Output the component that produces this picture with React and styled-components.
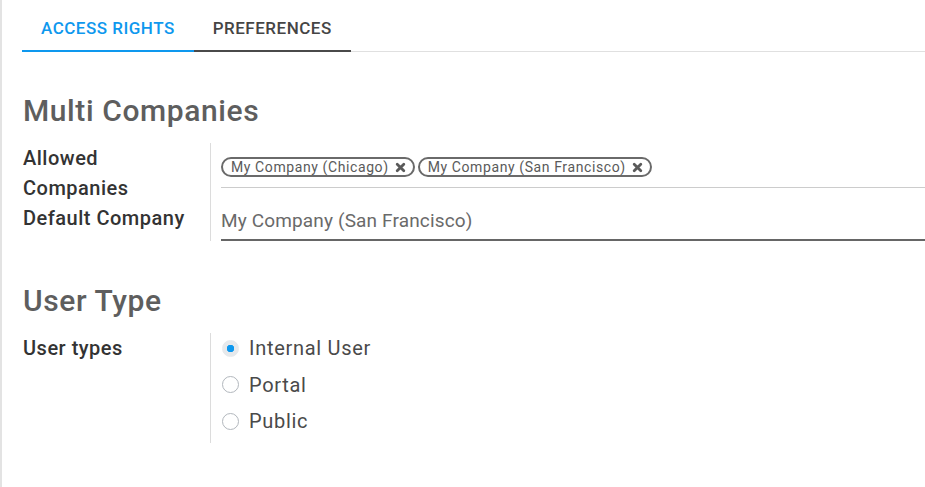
import styled, { createGlobalStyle } from "styled-components"

const GlobalStyle = createGlobalStyle`
  body {
    margin: 0;
    background: #FFFFFF;
    font-family: 'Roboto', 'Liberation Sans', sans-serif;
  }
`

function RemoveIcon () {
  return (
    <svg width="11" height="11" viewBox="0 0 11 11">
      <path d="M2.2 2.2 L8.8 8.8 M8.8 2.2 L2.2 8.8" stroke="#5a5a5a" strokeWidth="2.8" strokeLinecap="round" />
    </svg>
  )
}

function Tag ({label}) {
  return (
    <StyledTag>
      <span>{label}</span>
      <RemoveIcon />
    </StyledTag>
  )
}

function Radio ({label, checked}) {
  return (
    <Option>
      <Circle $checked={checked} />
      <OptionLabel>{label}</OptionLabel>
    </Option>
  )
}

export default function App () {
  return (
    <>
      <GlobalStyle />
      <Sheet>
        <Tabs>
          <Tab $active>Access Rights</Tab>
          <Tab $hover>Preferences</Tab>
        </Tabs>

        <Heading $first>Multi Companies</Heading>
        <Group>
          <LabelCol>
            <Label>Allowed<br />Companies</Label>
            <Label>Default Company</Label>
          </LabelCol>
          <FieldCol>
            <TagsField>
              <Tag label = {"My Company (Chicago)"} />
              <Tag label = {"My Company (San Francisco)"} />
            </TagsField>
            <Gap />
            <InputField>My Company (San Francisco)</InputField>
          </FieldCol>
        </Group>

        <Heading>User Type</Heading>
        <Group>
          <LabelCol>
            <Label>User types</Label>
          </LabelCol>
          <FieldCol>
            <Radio label = {"Internal User"} checked />
            <Radio label = {"Portal"} />
            <Radio label = {"Public"} />
          </FieldCol>
        </Group>
      </Sheet>
    </>
  )
}

const Sheet = styled.div`
  min-height: 100vh;
  box-sizing: border-box;
  border-left: 2px solid #E3E3E3;
  padding-left: 20px;
`
const Tabs = styled.div`
  display: flex;
  border-bottom: 1px solid #E0E0E0;
`
const Tab = styled.div`
  padding: 18px 19px 12px;
  margin-bottom: -1px;
  font-size: 17px;
  line-height: 20px;
  letter-spacing: 0.5px;
  font-weight: 500;
  text-transform: uppercase;
  color: ${p => p.$active ? "#0E98EE" : "#454545"};
  border-bottom: 2px solid ${p => p.$active ? "#0E98EE" : p.$hover ? "#4A4A4A" : "transparent"};
`
const Heading = styled.h2`
  margin: ${p => p.$first ? "41px" : "36px"} 0 14px 1px;
  font-size: 30px;
  line-height: 36px;
  letter-spacing: 0.6px;
  font-weight: 500;
  color: #5E5E5E;
`
const Group = styled.div`
  display: grid;
  grid-template-columns: 189px 1fr;
  padding-bottom: 6px;
`
const LabelCol = styled.div`
  border-right: 1px solid #DCDCDC;
  padding-left: 1px;
`
const Label = styled.div`
  font-size: 20px;
  line-height: 30px;
  letter-spacing: 0.5px;
  font-weight: 500;
  color: #333333;
`
const FieldCol = styled.div`
  padding-left: 10px;
  display: flex;
  flex-direction: column;
`
const TagsField = styled.div`
  display: flex;
  gap: 3px;
  padding: 14px 0 10px;
  border-bottom: 1px solid #CCCCCC;
`
const StyledTag = styled.div`
  display: flex;
  align-items: center;
  gap: 6px;
  height: 20px;
  box-sizing: border-box;
  padding: 0 7px 0 8px;
  border: 2px solid #6A6A6A;
  border-radius: 10px;
  font-size: 14px;
  letter-spacing: 0.6px;
  color: #5A5A5A;
`
const Gap = styled.div`
  height: 15px;
`
const InputField = styled.div`
  padding: 6px 0;
  font-size: 19px;
  line-height: 24px;
  letter-spacing: 0.15px;
  color: #6A6A6A;
  border-bottom: 2px solid #666666;
`
const Option = styled.div`
  display: flex;
  align-items: center;
  gap: 10px;
  height: 36.5px;
  box-sizing: border-box;
  padding: 3px 0 9.5px 1px;
`
const Circle = styled.span`
  width: 17px;
  height: 17px;
  box-sizing: border-box;
  border-radius: 50%;
  border: 1px solid ${p => p.$checked ? "#E6E9EC" : "#B2B7BD"};
  background: ${p => p.$checked ? "radial-gradient(circle, #0E98EE 0 3.5px, #E6E9EC 4px)" : "#FFFFFF"};
`
const OptionLabel = styled.span`
  font-size: 20px;
  line-height: 24px;
  letter-spacing: 0.7px;
  color: #4A4A4A;
`
